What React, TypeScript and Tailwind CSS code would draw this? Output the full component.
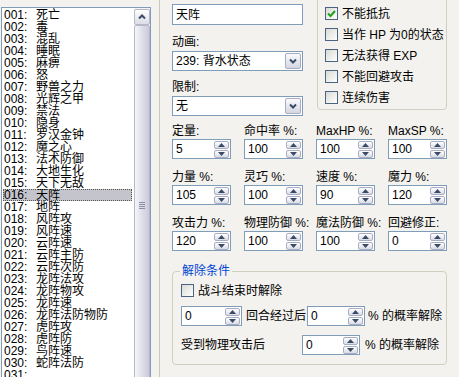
import clsx from 'clsx'

const states = [
  '死亡', '毒', '混乱', '睡眠', '麻痹', '怒', '野兽之力', '光辉之甲', '禁法', '隐身',
  '罗汉金钟', '魔之心', '法术防御', '大地生化', '天下无敌', '天阵', '地阵', '风阵攻', '风阵速', '云阵速',
  '云阵主防', '云阵次防', '龙阵法攻', '龙阵物攻', '龙阵速', '龙阵法防物防', '虎阵攻', '虎阵防', '鸟阵速', '蛇阵法防',
  '',
]

const params = [
  { label: '定量:', value: '5' },
  { label: '命中率 %:', value: '100' },
  { label: 'MaxHP %:', value: '100' },
  { label: 'MaxSP %:', value: '100' },
  { label: '力量 %:', value: '105' },
  { label: '灵巧 %:', value: '100' },
  { label: '速度 %:', value: '90' },
  { label: '魔力 %:', value: '120' },
  { label: '攻击力 %:', value: '120' },
  { label: '物理防御 %:', value: '100' },
  { label: '魔法防御 %:', value: '100' },
  { label: '回避修正:', value: '0' },
]

const flags = [
  { label: '不能抵抗', checked: true },
  { label: '当作 HP 为0的状态', checked: false },
  { label: '无法获得 EXP', checked: false },
  { label: '不能回避攻击', checked: false },
  { label: '连续伤害', checked: false },
]

function Tri({ up }: { up?: boolean }) {
  return (
    <svg width="7" height="4" viewBox="0 0 7 4">
      <path d={up ? 'M0 4 L3.5 0 L7 4Z' : 'M0 0 L3.5 4 L7 0Z'} fill="#3b4a66" />
    </svg>
  )
}

function SpinButtons() {
  return (
    <div className="flex flex-col gap-px">
      <div className="flex h-[8px] w-[15px] items-center justify-center rounded-[2px] border border-[#a9adc2] bg-gradient-to-b from-white to-[#d9dbe6]">
        <Tri up />
      </div>
      <div className="flex h-[8px] w-[15px] items-center justify-center rounded-[2px] border border-[#a9adc2] bg-gradient-to-b from-white to-[#d9dbe6]">
        <Tri />
      </div>
    </div>
  )
}

function SpinBox({ value, className }: { value: string; className?: string }) {
  return (
    <div className={clsx('flex h-[20px] items-center justify-between border border-[#7f9db9] bg-white pl-[3px] pr-px', className)}>
      <span>{value}</span>
      <SpinButtons />
    </div>
  )
}

function ComboBox({ value }: { value: string }) {
  return (
    <div className="flex h-[20px] items-center justify-between border border-[#7f9db9] bg-white pl-[3px] pr-px">
      <span>{value}</span>
      <div className="flex h-[16px] w-[16px] items-center justify-center rounded-[2px] border border-[#a9adc2] bg-gradient-to-b from-[#fafbfd] to-[#d3d6e2]">
        <svg width="8" height="6" viewBox="0 0 8 6">
          <path d="M1 1.5 L4 4.5 L7 1.5" stroke="#3b4a66" strokeWidth="2" fill="none" />
        </svg>
      </div>
    </div>
  )
}

function CheckBox({ label, checked }: { label: string; checked?: boolean }) {
  return (
    <div className="flex h-[13px] items-center gap-[4px]">
      <span className="flex h-[13px] w-[13px] shrink-0 items-center justify-center border border-[#4a6482] bg-gradient-to-br from-[#d9d9d4] to-white">
        {checked && (
          <svg width="9" height="9" viewBox="0 0 9 9">
            <path d="M1 4.5 L3.5 7 L8 2" stroke="#21a121" strokeWidth="2" fill="none" />
          </svg>
        )}
      </span>
      <span className="whitespace-nowrap">{label}</span>
    </div>
  )
}

export default function App() {
  return (
    <div className="flex h-[377px] w-[459px] overflow-hidden bg-[#f3f2ee] text-[12px] leading-[12px] text-black font-['Liberation_Sans','Noto_Sans_CJK_SC',sans-serif]">
      {/* state list */}
      <div className="ml-px mt-[7px] flex h-[380px] w-[150px] shrink-0 border border-[#7f9db9] bg-white">
        <ul className="flex-1 pl-px pt-px">
          {states.map((name, i) => {
            const selected = i === 15
            return (
              <li
                key={i}
                className={clsx(
                  'flex h-[12px] items-center whitespace-nowrap',
                  selected && 'mr-[2px] bg-[#c4c4cc] outline-1 outline-dotted -outline-offset-1 outline-[#555]'
                )}
              >
                <span className="w-[33px] pl-px">{String(i + 1).padStart(3, '0')}:</span>
                <span>{name}</span>
              </li>
            )
          })}
        </ul>
        <div className="flex w-[16px] flex-col bg-[#f4f4f6]">
          <div className="mt-px flex h-[16px] items-center justify-center rounded-[2px] border border-[#b7b9c9] bg-gradient-to-b from-white to-[#dcdde6]">
            <svg width="8" height="6" viewBox="0 0 8 6">
              <path d="M1 4.5 L4 1.5 L7 4.5" stroke="#3b4a66" strokeWidth="2" fill="none" />
            </svg>
          </div>
          <div className="flex flex-1 items-center justify-center rounded-[2px] border border-[#b7b9c9] bg-gradient-to-r from-[#f5f5f9] to-[#c9c9db]">
            <div className="flex flex-col gap-px">
              <div className="h-px w-[6px] bg-[#8c8ca8]" />
              <div className="h-px w-[6px] bg-[#8c8ca8]" />
              <div className="h-px w-[6px] bg-[#8c8ca8]" />
              <div className="h-px w-[6px] bg-[#8c8ca8]" />
            </div>
          </div>
        </div>
      </div>

      {/* editor panel */}
      <div className="ml-[8px] flex flex-1 flex-col border-l border-[#c9c8bd] pl-[12px] pr-[11px]">
        <div className="flex items-start">
          <div className="flex w-[131px] flex-col">
            <div className="mt-[4px] flex h-[21px] items-center border border-[#7f9db9] bg-white pl-[3px]">天阵</div>
            <div className="mt-[11px]">动画:</div>
            <div className="mt-[3px]">
              <ComboBox value="239: 背水状态" />
            </div>
            <div className="mt-[10px]">限制:</div>
            <div className="mt-[3px]">
              <ComboBox value="无" />
            </div>
          </div>
          <div className="ml-[14px] -mt-[8px] flex h-[118px] w-[130px] flex-col gap-[8px] rounded-[4px] border border-[#d0d0bf] pl-[7px] pt-[14px]">
            {flags.map((f) => (
              <CheckBox key={f.label} label={f.label} checked={f.checked} />
            ))}
          </div>
        </div>

        <div className="mt-[9px] grid grid-cols-[59px_59px_59px_59px] gap-x-[13px] gap-y-[12px]">
          {params.map((p) => (
            <div key={p.label} className="flex flex-col gap-[2px]">
              <span className="whitespace-nowrap">{p.label}</span>
              <SpinBox value={p.value} />
            </div>
          ))}
        </div>

        <div className="relative mt-[20px] h-[94px] w-[275px] rounded-[4px] border border-[#d0d0bf] pl-[8px] pt-[12px]">
          <span className="absolute -top-[7px] left-[7px] bg-[#f3f2ee] px-[2px] text-[#0046d5]">解除条件</span>
          <CheckBox label="战斗结束时解除" />
          <div className="mt-[9px] flex items-center">
            <SpinBox value="0" className="w-[61px]" />
            <span className="ml-[4px] mr-px whitespace-nowrap">回合经过后</span>
            <SpinBox value="0" className="w-[58px]" />
            <span className="ml-[3px] whitespace-nowrap">% 的概率解除</span>
          </div>
          <div className="mt-[9px] flex items-center">
            <span className="w-[121px] whitespace-nowrap">受到物理攻击后</span>
            <SpinBox value="0" className="w-[58px]" />
            <span className="ml-[5px] whitespace-nowrap">% 的概率解除</span>
          </div>
        </div>
      </div>
    </div>
  )
}
